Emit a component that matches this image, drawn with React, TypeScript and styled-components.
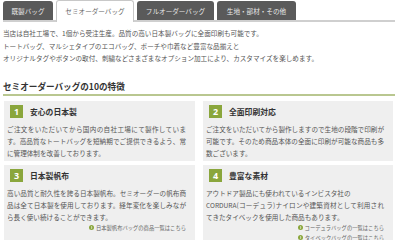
import React from "react";
import styled, { createGlobalStyle } from "styled-components";

const Global = createGlobalStyle`
  html, body { margin: 0; padding: 0; background: #ffffff; }
  body { font-family: "Noto Sans CJK JP", "Noto Sans", sans-serif; color: #555; }
  * { box-sizing: border-box; }
`;

const Page = styled.div`
  width: 400px;
  height: 240px;
  overflow: hidden;
  padding: 0 5px 0 3px;
`;

const TabBar = styled.div`
  display: flex;
  align-items: flex-end;
  gap: 3px;
  height: 22px;
  border-bottom: 2px solid #cfcfcf;
`;

const Tab = styled.div<{ $active?: boolean; $w: number }>`
  width: ${(p) => p.$w}px;
  height: ${(p) => (p.$active ? 22 : 19)}px;
  margin-bottom: ${(p) => (p.$active ? -2 : 0)}px;
  display: flex;
  align-items: center;
  justify-content: center;
  font-size: 6.6px;
  border-radius: 3px 3px 0 0;
  background: ${(p) => (p.$active ? "#ffffff" : "#5a5a5a")};
  color: ${(p) => (p.$active ? "#666" : "#e8e8e8")};
  border: ${(p) => (p.$active ? "1px solid #c8c8c8" : "none")};
  border-bottom: none;
  padding-bottom: ${(p) => (p.$active ? 1 : 0)}px;
`;

const Intro = styled.p`
  margin: 5px 0 0;
  font-size: 6.6px;
  line-height: 12.5px;
  color: #555;
`;

const Heading = styled.h2`
  margin: 15px 0 0;
  font-size: 8.6px;
  line-height: 12px;
  font-weight: 700;
  color: #333;
  padding-bottom: 2px;
  border-bottom: 2.5px solid #b9c790;
`;

const Grid = styled.div`
  display: grid;
  grid-template-columns: 191px 190px;
  column-gap: 8px;
  row-gap: 4px;
  margin: 5px 0 0 1px;
`;

const Card = styled.div`
  background: #efefef;
  padding: 4px 9px 2px 3px;
`;

const TitleRow = styled.div`
  display: flex;
  align-items: center;
  gap: 7px;
  height: 14px;
  padding-left: 3px;
`;

const Badge = styled.span`
  width: 13px;
  height: 13px;
  background: #8aa63c;
  color: #fff;
  font-family: "Noto Sans", "Liberation Sans", sans-serif;
  font-weight: 700;
  font-size: 9px;
  display: flex;
  align-items: center;
  justify-content: center;
`;

const Title = styled.h3`
  margin: 0;
  font-size: 7.8px;
  font-weight: 700;
  color: #333;
`;

const Body = styled.div`
  margin-top: 4px;
  font-size: 6.6px;
  line-height: 12px;
  color: #555;
`;

const Line = styled.span<{ $last?: boolean }>`
  display: block;
  white-space: nowrap;
  text-align: justify;
  text-align-last: ${(p) => (p.$last ? "left" : "justify")};
`;

const Links = styled.div`
  display: flex;
  flex-direction: column;
  align-items: flex-end;
`;

const LinkItem = styled.a`
  display: flex;
  align-items: center;
  gap: 2px;
  font-size: 5.3px;
  line-height: 10px;
  color: #666;
  text-decoration: none;
`;

const Arrow = () => (
  <svg width="5" height="5" viewBox="0 0 10 10">
    <circle cx="5" cy="5" r="5" fill="#8aa63c" />
    <path d="M4 2.8 L6.3 5 L4 7.2" stroke="#fff" strokeWidth="1.6" fill="none" />
  </svg>
);

type CardData = {
  n: string;
  title: string;
  lines: string[];
  justify: boolean[];
  links?: string[];
};

const cards: CardData[] = [
  {
    n: "1",
    title: "安心の日本製",
    lines: [
      "ご注文をいただいてから国内の自社工場にて製作していま",
      "す。高品質なトートバッグを短納期でご提供できるよう、常",
      "に管理体制を改善しております。",
    ],
    justify: [true, true, false],
  },
  {
    n: "2",
    title: "全面印刷対応",
    lines: [
      "ご注文をいただいてから製作しますので生地の段階で印刷が",
      "可能です。そのため商品本体の全面に印刷が可能な商品も多",
      "数ございます。",
    ],
    justify: [true, true, false],
  },
  {
    n: "3",
    title: "日本製帆布",
    lines: [
      "高い品質と耐久性を誇る日本製帆布。セミオーダーの帆布商",
      "品は全て日本製を使用しております。経年変化を楽しみなが",
      "ら長く使い続けることができます。",
    ],
    justify: [true, true, false],
    links: ["日本製帆布バッグの商品一覧はこちら"],
  },
  {
    n: "4",
    title: "豊富な素材",
    lines: [
      "アウトドア製品にも使われているインビスタ社の",
      "CORDURA(コーデュラ)ナイロンや建築資材として利用され",
      "てきたタイベックを使用した商品もあります。",
    ],
    justify: [false, true, false],
    links: ["コーデュラバッグの一覧はこちら", "タイベックバッグの一覧はこちら"],
  },
];

export default function App() {
  return (
    <>
      <Global />
      <Page>
        <TabBar>
          <Tab $w={50}>既製バッグ</Tab>
          <Tab $w={78} $active>
            セミオーダーバッグ
          </Tab>
          <Tab $w={77}>フルオーダーバッグ</Tab>
          <Tab $w={79}>生地・部材・その他</Tab>
        </TabBar>
        <Intro>
          当店は自社工場で、1個から受注生産。品質の高い日本製バッグに全面印刷も可能です。
          <br />
          トートバッグ、マルシェタイプのエコバッグ、ポーチや巾着など豊富な品揃えと
          <br />
          オリジナルタグやボタンの取付、刺繍などさまざまなオプション加工により、カスタマイズを楽しめます。
        </Intro>
        <Heading>セミオーダーバッグの10の特徴</Heading>
        <Grid>
          {cards.map((c) => (
            <Card key={c.n}>
              <TitleRow>
                <Badge>{c.n}</Badge>
                <Title>{c.title}</Title>
              </TitleRow>
              <Body>
                {c.lines.map((l, i) => (
                  <Line key={i} $last={!c.justify[i]}>
                    {l}
                  </Line>
                ))}
              </Body>
              {c.links && (
                <Links>
                  {c.links.map((t) => (
                    <LinkItem key={t} href="#">
                      <Arrow />
                      {t}
                    </LinkItem>
                  ))}
                </Links>
              )}
            </Card>
          ))}
        </Grid>
      </Page>
    </>
  );
}
